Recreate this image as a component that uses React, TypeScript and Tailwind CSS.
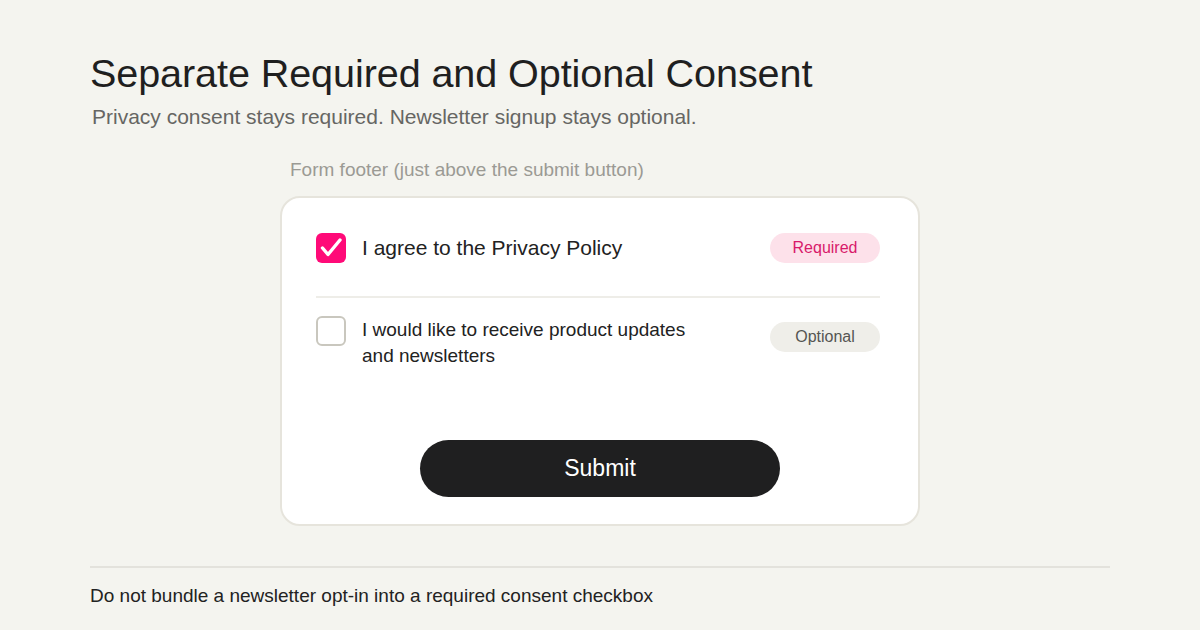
import React from "react";

export default function App() {
  return (
    <div
      className="w-[1200px] h-[630px] bg-[#f4f4ef] overflow-hidden"
      style={{ fontFamily: '"Liberation Sans", Arial, sans-serif' }}
    >
      <div className="px-[90px] pt-[50px]">
        <h1 className="text-[39.6px] leading-[46px] text-[#1f1f1f] tracking-[-0.1px]">
          Separate Required and Optional Consent
        </h1>
        <p className="mt-[8px] ml-[2px] text-[21px] leading-[26px] text-[#666663]">
          Privacy consent stays required. Newsletter signup stays optional.
        </p>
        <div className="ml-[190px] mt-[28px] w-[640px]">
          <p className="ml-[10px] text-[19px] leading-[24px] text-[#9b9a94]">
            Form footer (just above the submit button)
          </p>
          <div className="mt-[14px] bg-white border-2 border-[#e6e4dc] rounded-[20px] pt-[35px] pb-[27px] pl-[34px] pr-[38px]">
            <div className="flex items-center h-[30px]">
              <div className="w-[30px] h-[30px] rounded-[6px] bg-[#ff0a78] flex items-center justify-center shrink-0">
                <svg width="24" height="24" viewBox="0 0 24 24" fill="none">
                  <path
                    d="M3.5 12l5.5 6.5L21 4"
                    stroke="white"
                    strokeWidth="3.4"
                    strokeLinecap="round"
                    strokeLinejoin="round"
                  />
                </svg>
              </div>
              <span className="ml-[16px] text-[21px] text-[#222] flex-1">
                I agree to the Privacy Policy
              </span>
              <span className="w-[110px] h-[30px] rounded-full bg-[#fde1ea] text-[#d81a6a] text-[16px] flex items-center justify-center">
                Required
              </span>
            </div>
            <div className="mt-[33px] h-[2px] bg-[#eeede8]" />
            <div className="mt-[18px] flex items-start">
              <div className="w-[30px] h-[30px] rounded-[6px] border-2 border-[#c9c7be] shrink-0" />
              <span className="ml-[16px] mt-[1px] text-[19px] leading-[26px] text-[#222] flex-1">
                I would like to receive product updates
                <br />
                and newsletters
              </span>
              <span className="mt-[6px] w-[110px] h-[30px] rounded-full bg-[#efeee9] text-[#555552] text-[16px] flex items-center justify-center">
                Optional
              </span>
            </div>
            <div className="mt-[71px] -mr-[4px] flex justify-center">
              <button className="w-[360px] h-[57px] rounded-full bg-[#1f1f20] text-white text-[23px]">
                Submit
              </button>
            </div>
          </div>
        </div>
        <div className="mt-[40px] h-[2px] bg-[#e3e2dc]" />
        <p className="mt-[16px] text-[19px] leading-[24px] text-[#222]">
          Do not bundle a newsletter opt-in into a required consent checkbox
        </p>
      </div>
    </div>
  );
}
